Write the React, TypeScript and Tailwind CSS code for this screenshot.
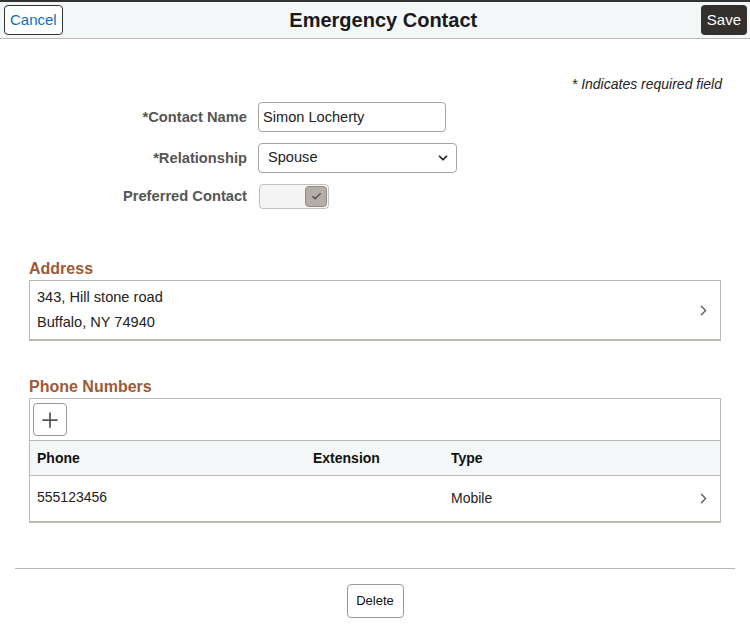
import { ChevronRight, Plus, Check, ChevronDown } from "lucide-react";

const font = { fontFamily: '"Liberation Sans", Arial, sans-serif' };

function ChevronLink() {
    return <ChevronRight size={17} strokeWidth={1.75} className="text-[#555]" />;
}

export default function App() {
    return (
        <div className="w-[750px] h-[638px] bg-white text-[#222] overflow-hidden" style={font}>
            {/* header */}
            <div className="h-[39px] border-t-2 border-t-[#333] border-b border-b-[#bbb8b2] bg-[#f4f7f8] flex items-center justify-between px-[4px]">
                <button className="h-[30px] px-[5px] rounded-[4px] border border-[#333] bg-white text-[#0b6fb8] text-[15px]">
                    Cancel
                </button>
                <h1 className="text-[20px] font-bold text-[#1a1a1a] pl-[3px]">Emergency Contact</h1>
                <button className="h-[30px] px-[6px] rounded-[4px] bg-[#33302e] text-white text-[15px] -mr-[1px]">
                    Save
                </button>
            </div>

            <div className="pt-[35px] pr-[28px] text-right text-[14px] italic text-[#222]">
                * Indicates required field
            </div>

            {/* form */}
            <div className="mt-[7px] flex flex-col gap-[11px]">
                <div className="flex items-center">
                    <label className="w-[247px] text-right text-[14.7px] font-bold text-[#555]">*Contact Name</label>
                    <input
                        readOnly
                        value="Simon Locherty"
                        className="ml-[11px] w-[188px] h-[30px] border border-[#a8a39d] rounded-[4px] px-[4px] text-[14.6px] text-[#222] bg-white"
                    />
                </div>
                <div className="flex items-center">
                    <label className="w-[247px] text-right text-[14.7px] font-bold text-[#555]">*Relationship</label>
                    <div className="ml-[11px] w-[199px] h-[30px] border border-[#a8a39d] rounded-[4px] pl-[9px] pr-[6px] flex items-center justify-between text-[14.6px] text-[#222]">
                        <span>Spouse</span>
                        <ChevronDown size={14} strokeWidth={3} className="text-[#222]" />
                    </div>
                </div>
                <div className="flex items-center">
                    <label className="w-[247px] text-right text-[14.7px] font-bold text-[#555]">Preferred Contact</label>
                    <div className="ml-[12px] w-[70px] h-[25px] border border-[#c4c0bb] rounded-[4px] bg-[#f4f4f4] flex items-center justify-end pr-[1px]">
                        <div className="w-[22px] h-[21px] rounded-[4px] border border-[#8f8a85] bg-[#b5aea8] flex items-center justify-center">
                            <Check size={11} strokeWidth={3.5} className="text-[#555]" />
                        </div>
                    </div>
                </div>
            </div>

            {/* address */}
            <div className="mt-[50px] px-[29px]">
                <h2 className="text-[16px] font-bold text-[#9c5a37] leading-[20px]">Address</h2>
                <div className="mt-[1px] h-[61px] border border-[#bbb8b2] border-b-2 flex items-center justify-between pl-[7px] pr-[8px]">
                    <div className="text-[14.6px] text-[#222] leading-[25px]">
                        <div>343, Hill stone road</div>
                        <div>Buffalo, NY 74940</div>
                    </div>
                    <ChevronLink />
                </div>
            </div>

            {/* phone numbers */}
            <div className="mt-[36px] px-[29px]">
                <h2 className="text-[16px] font-bold text-[#9c5a37] leading-[20px]">Phone Numbers</h2>
                <div className="mt-[1px] border border-[#bbb8b2] border-b-2">
                    <div className="h-[42px] flex items-center pl-[3px] border-b border-[#bbb8b2]">
                        <button className="w-[34px] h-[33px] rounded-[4px] border border-[#999] bg-white flex items-center justify-center">
                            <Plus size={24} strokeWidth={1.75} className="text-[#555]" />
                        </button>
                    </div>
                    <div className="h-[35px] bg-[#f4f7f8] border-b border-[#bbb8b2] flex items-center text-[14px] font-bold text-[#111]">
                        <div className="w-[283px] pl-[7px]">Phone</div>
                        <div className="w-[138px]">Extension</div>
                        <div>Type</div>
                    </div>
                    <div className="h-[45px] flex items-center text-[14px] text-[#222]">
                        <div className="w-[283px] pl-[7px] -mt-[2px]">555123456</div>
                        <div className="w-[138px]"></div>
                        <div className="flex-1">Mobile</div>
                        <div className="pr-[8px]">
                            <ChevronLink />
                        </div>
                    </div>
                </div>
            </div>

            {/* footer */}
            <div className="mt-[45px] mx-[15px] border-t border-[#bbb8b2] flex justify-center pt-[15px]">
                <button className="w-[57px] h-[34px] rounded-[4px] border border-[#999] bg-white text-[13px] text-[#111]">
                    Delete
                </button>
            </div>
        </div>
    );
}
